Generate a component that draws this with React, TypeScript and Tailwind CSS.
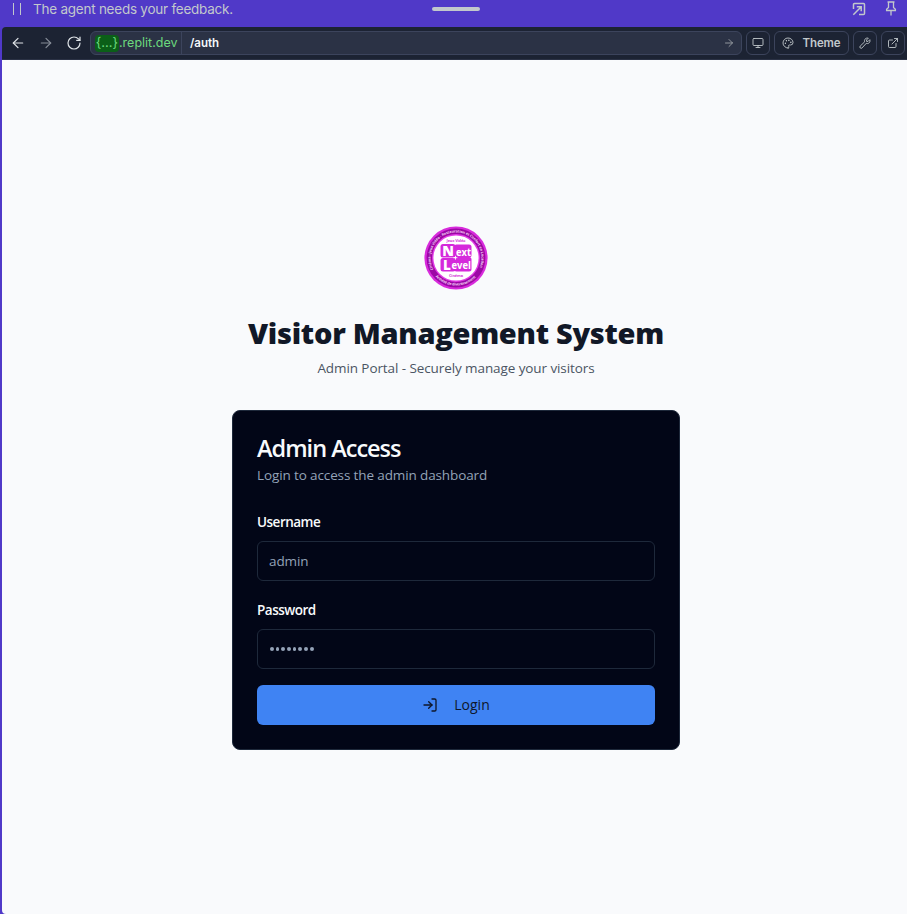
import React from "react";
import { ArrowLeft, ArrowRight, RotateCw, Monitor, Palette, ExternalLink, LogIn } from "lucide-react";

function Logo() {
  return (
    <svg viewBox="0 0 64 64" className="size-16" fontFamily="'Open Sans', sans-serif" fontWeight="700">
      <defs>
        <path id="ringTop" d="M9.4 43.5 A25.4 25.4 0 1 1 54.6 43.5" />
        <path id="ringBottom" d="M11.5 50.5 A27.6 27.6 0 0 0 52.5 50.5" />
      </defs>
      <circle cx="32" cy="32" r="31.6" fill="#d82bdc" />
      <circle cx="32" cy="32" r="29.4" fill="#9c08a5" />
      <circle cx="32" cy="32" r="24" fill="#e13be5" />
      <circle cx="32" cy="32" r="22.6" fill="#ffffff" />
      <text fontSize="3.7" fill="#f3d5f5"><textPath href="#ringTop" textLength="101">Cinéma - Jeux Vidéo - Restauration et Confort en Location</textPath></text>
      <text fontSize="3.7" fill="#f3d5f5"><textPath href="#ringBottom" textLength="45">Activité de divertissement</textPath></text>
      <text x="22.5" y="15.8" fontSize="3.9" fill="#d53bd9" textLength="19">Jeux Vidéo</text>
      <rect x="16.5" y="18" width="15" height="13.5" rx="2.5" fill="#d529db" />
      <rect x="30" y="18.5" width="17.5" height="13" rx="2.5" fill="#d529db" />
      <rect x="16.5" y="32" width="15" height="13.5" rx="2.5" fill="#d529db" />
      <rect x="30" y="31" width="17.5" height="14.5" rx="2.5" fill="#d529db" />
      <path d="M31.5 29.8v3.8M29.6 31.7h3.8" stroke="#fff" strokeWidth="0.9" />
      <g fill="#ffffff">
        <text x="18.3" y="29.7" fontSize="14" fontWeight="800" textLength="11">N</text>
        <text x="32" y="29.5" fontSize="11" textLength="15" lengthAdjust="spacingAndGlyphs">ext</text>
        <text x="19" y="43.5" fontSize="13.5" fontWeight="800">L</text>
        <text x="27.5" y="42.5" fontSize="11" textLength="19.5" lengthAdjust="spacingAndGlyphs">evel</text>
      </g>
      <text x="25" y="51.3" fontSize="3.9" fill="#d53bd9" textLength="14">Cinéma</text>
    </svg>
  );
}

function PopOutIcon() {
  return (
    <svg viewBox="0 0 14 14" className="size-3.5" fill="none" stroke="currentColor" strokeWidth="1.5">
      <path d="M1.5 7V2.5a1 1 0 0 1 1-1h9a1 1 0 0 1 1 1v9a1 1 0 0 1-1 1H7" />
      <path d="M1.3 12.7 9 5M4.8 4.8h4.4v4.4" />
    </svg>
  );
}

function PinIcon() {
  return (
    <svg viewBox="0 0 12 16" className="h-4 w-3" fill="none" stroke="currentColor" strokeWidth="1.3">
      <path d="M2.5 2h7M3.5 2v5.5L1.6 9.2v1.3h8.8V9.2L8.5 7.5V2M6 10.5V15.5" />
    </svg>
  );
}

function WrenchIcon() {
  return (
    <svg viewBox="0 0 12 12" className="size-3" fill="none" stroke="currentColor" strokeWidth="0.9" strokeLinejoin="round">
      <path d="M9.3 1.2 7.6 2.9v1.5h1.5l1.7-1.7c.5 1.6-.1 2.9-1.1 3.5-.8.5-1.8.4-2.4.1l-4.2 4.6a1.2 1.2 0 0 1-1.9-1.8L5.7 4.8c-.4-.8-.3-1.8.3-2.6.8-1 2-1.4 3.3-1Z" />
    </svg>
  );
}

const toolButton = "flex h-6 shrink-0 items-center justify-center rounded-md border border-[#3c445c] text-[#c2c8cc]";

export default function App() {
  return (
    <div className="flex h-[914px] w-[907px] flex-col overflow-hidden bg-[#5039c8] font-['Open_Sans',sans-serif]">
      <header className="flex h-[27px] items-start text-[#c2c8cc]">
        <div className="flex w-[432px] items-start pl-[13px]">
          <div className="mt-[3px] flex h-3 w-2 justify-between">
            <i className="w-px bg-[#c2c8cc]" />
            <i className="w-px bg-[#c2c8cc]" />
          </div>
          <span className="ml-3 font-['Inter',sans-serif] text-[13.5px] leading-[19px] tracking-[-0.24px] whitespace-nowrap">The agent needs your feedback.</span>
        </div>
        <div className="mt-[7px] h-1 w-12 rounded-full bg-[#c2c8cc]" />
        <div className="ml-auto flex gap-[19px] pr-2.5">
          <div className="pt-0.5"><PopOutIcon /></div>
          <PinIcon />
        </div>
      </header>
      <nav className="ml-0.5 flex h-[33px] shrink-0 items-center rounded-tl-sm border-b border-[#2b3245] bg-[#1c2333] pr-0.5 pl-2 font-['Inter',sans-serif] text-xs text-[#f5f9fc]">
        <ArrowLeft className="size-4 text-[#dfe4e8]" strokeWidth={1.8} />
        <ArrowRight className="ml-3 size-4 text-[#868d98]" strokeWidth={1.8} />
        <RotateCw className="ml-3 size-4 text-[#dfe4e8]" strokeWidth={1.8} />
        <div className="ml-2 flex h-6 w-[652px] items-center rounded-md border border-[#3c445c] bg-[#2b3245]">
          <div className="flex h-full w-[91px] items-center border-r border-[#3c445c] pl-1 text-[#6bd97e]">
            <span className="flex h-[17px] w-6 items-center justify-center rounded bg-[#0b5f18] text-[13px]">{"{...}"}</span>
            <span className="text-[12.5px]">.replit.dev</span>
          </div>
          <span className="ml-2 pt-0.5 text-[11.5px] font-semibold">/auth</span>
          <ArrowRight className="mr-1.5 ml-auto size-3 text-[#9da2a6]" strokeWidth={1.8} />
        </div>
        <div className={`${toolButton} ml-1 w-6`}><Monitor className="size-3" strokeWidth={1.8} /></div>
        <div className={`${toolButton} ml-1 w-[75px] gap-2`}><Palette className="size-3" strokeWidth={1.8} /><span className="pt-0.5 text-[11.5px] font-semibold tracking-[-0.1px]">Theme</span></div>
        <div className={`${toolButton} ml-1 w-6`}><WrenchIcon /></div>
        <div className={`${toolButton} ml-1 w-6`}><ExternalLink className="size-3" strokeWidth={1.8} /></div>
      </nav>
      <main className="ml-0.5 flex flex-1 flex-col items-center rounded-bl bg-[#f9fafc] pt-[166px] pl-[3px]">
        <Logo />
        <h1 className="mt-[25px] text-[29px] leading-9 font-extrabold tracking-[-0.28px] whitespace-nowrap text-[#111827]">Visitor Management System</h1>
        <p className="mt-[7px] text-[13.5px] leading-5 tracking-[-0.09px] whitespace-nowrap text-[#4b5563]">Admin Portal - Securely manage your visitors</p>
        <section className="mt-8 h-[340px] w-[448px] rounded-lg border border-[#1e293b] bg-[#020617] px-6 pt-6 text-[#f8fafc]">
          <h2 className="-mt-[3px] text-[23.5px] leading-[32px] font-semibold tracking-[-1px]">Admin Access</h2>
          <p className="mt-px text-[13.5px] leading-5 tracking-[-0.12px] text-[#94a3b8]">Login to access the admin dashboard</p>
          <form className="mt-[30px] flex flex-col">
            <label className="text-[13.5px] leading-[14px] font-semibold tracking-[-0.5px]">Username</label>
            <div className="mt-3 flex h-10 items-center rounded-md border border-[#1e293b] px-[11px] text-[13.5px] tracking-[-0.1px] text-[#94a3b8]">admin</div>
            <label className="mt-[22px] text-[13.5px] leading-[14px] font-semibold tracking-[-0.5px]">Password</label>
            <div className="mt-3 flex h-10 items-center rounded-md border border-[#1e293b] px-3">
              <div className="flex gap-[2px]">{Array.from({ length: 8 }, (_, i) => <i key={i} className="size-[3.7px] rounded-full bg-[#94a3b8]" />)}</div>
            </div>
            <button type="button" className="mt-4 flex h-10 items-center justify-center gap-4 rounded-md bg-[#3f83f3] text-sm font-medium text-[#0f172a]">
              <LogIn className="size-4" />Login
            </button>
          </form>
        </section>
      </main>
    </div>
  );
}
